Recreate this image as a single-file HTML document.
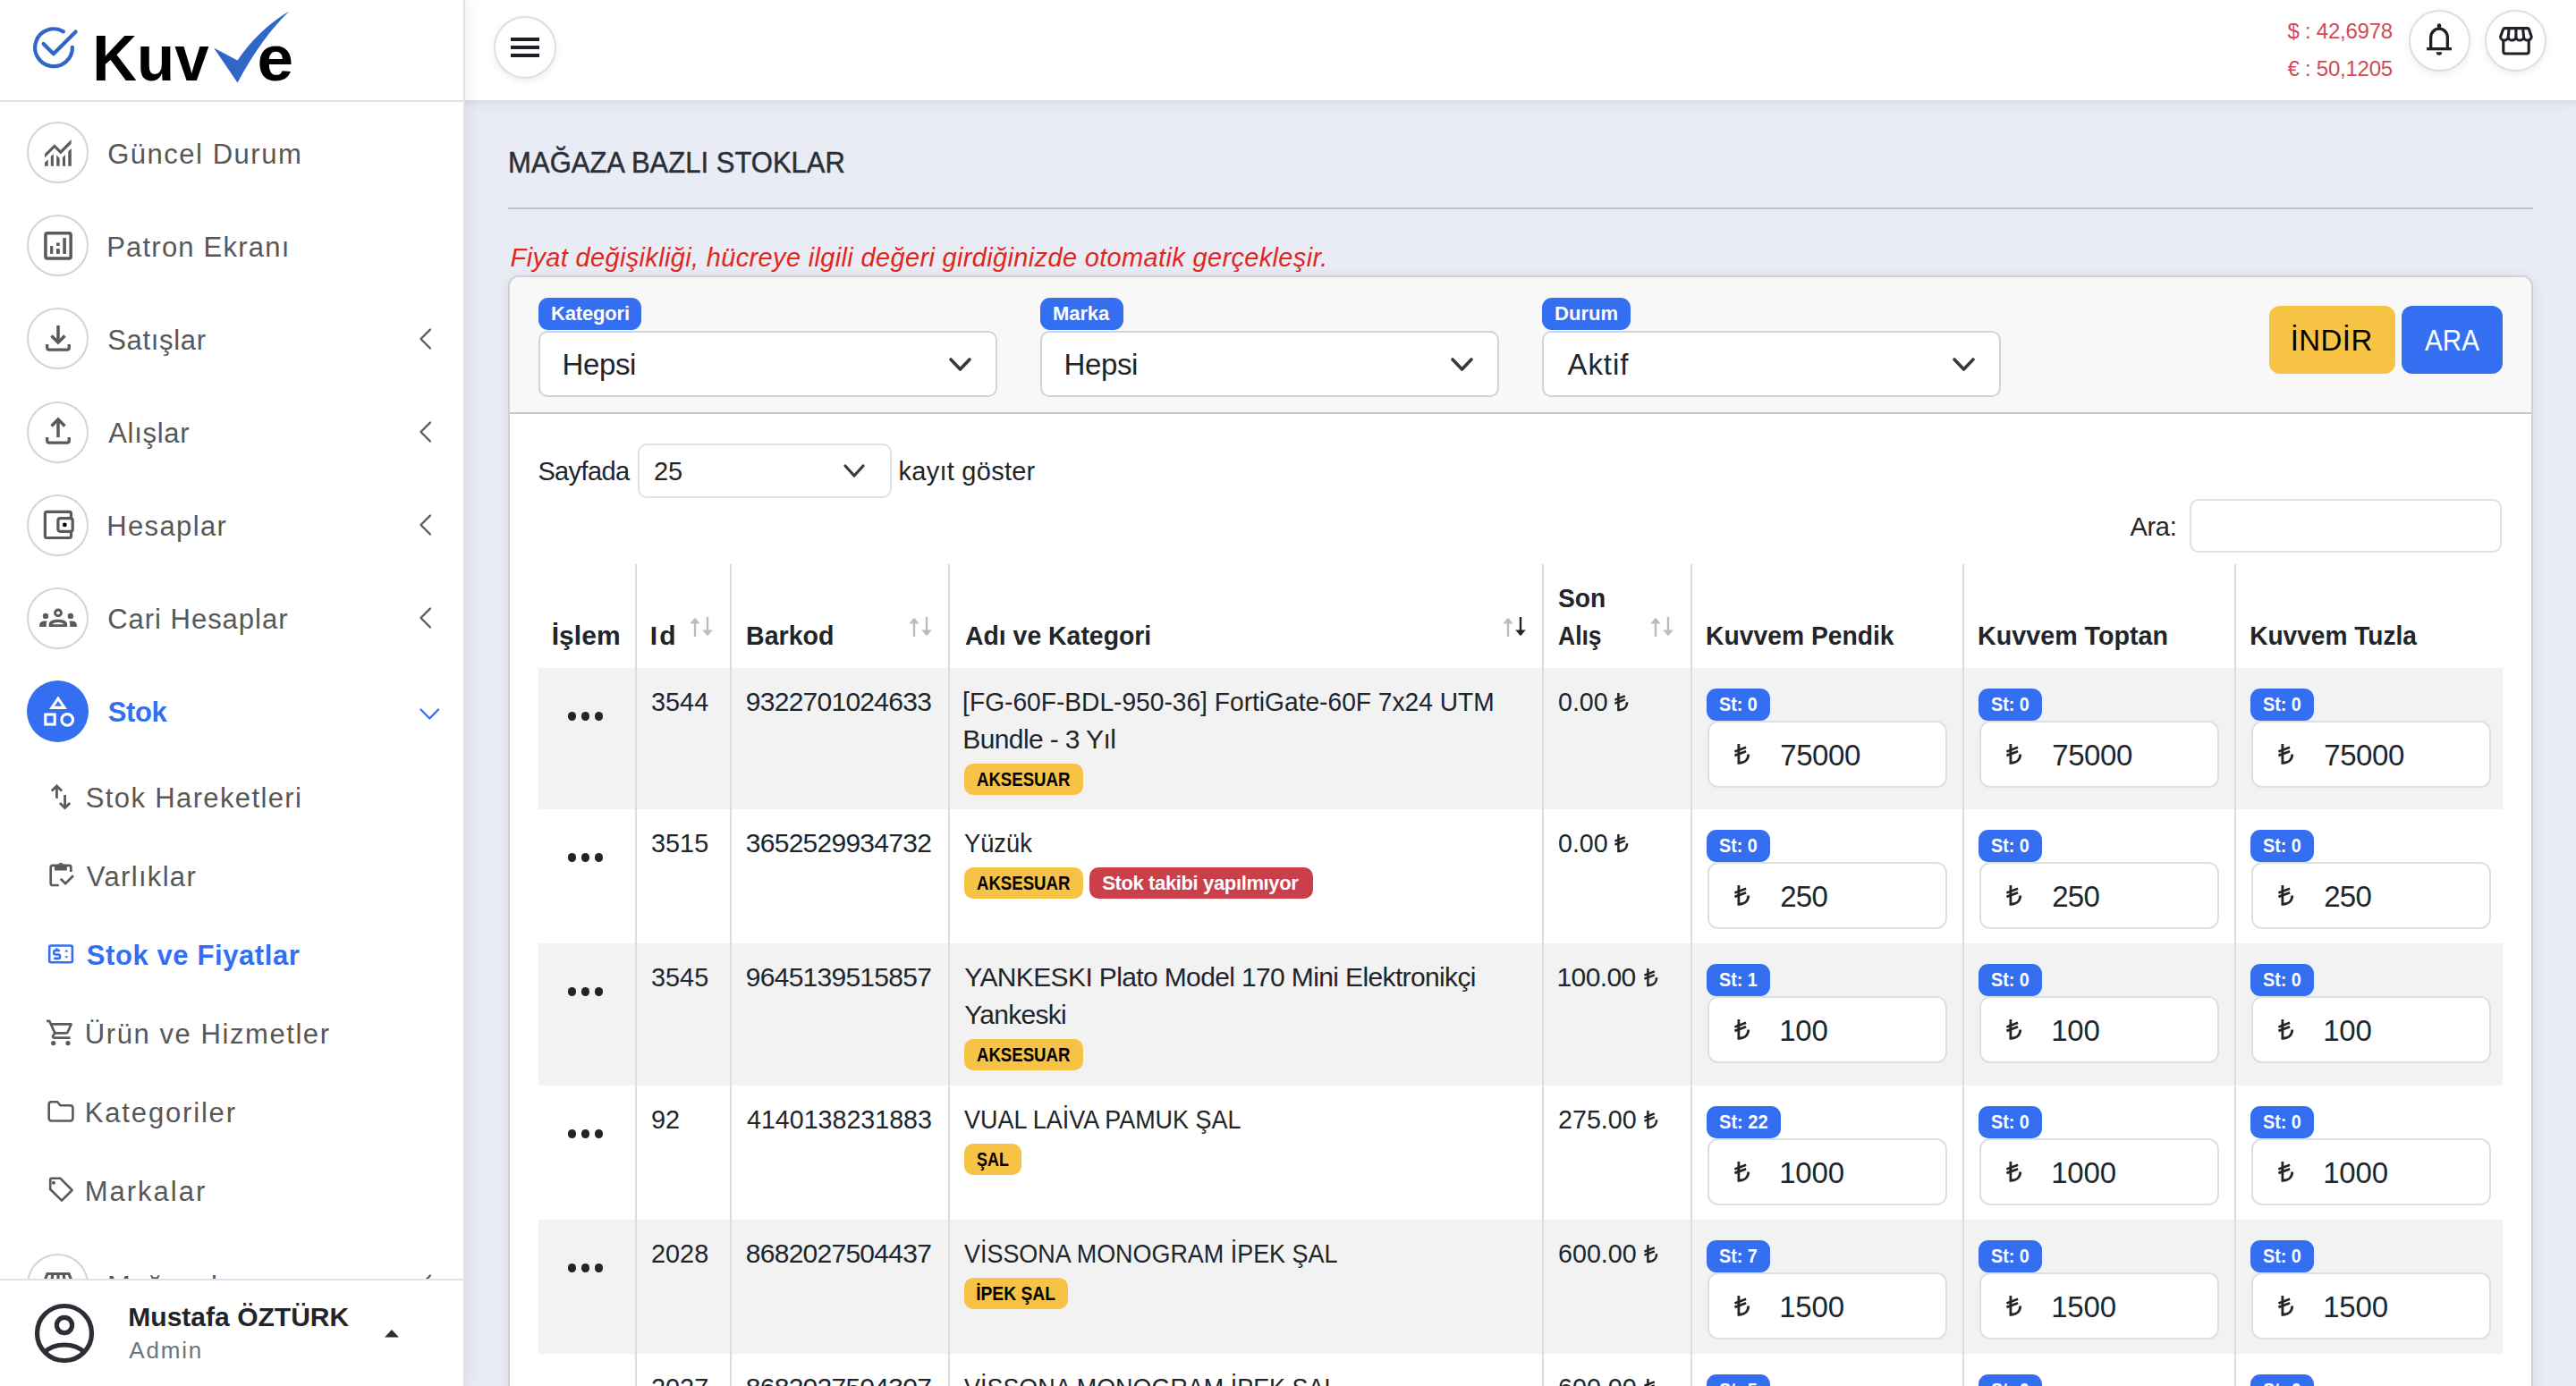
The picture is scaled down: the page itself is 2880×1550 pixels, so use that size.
<!DOCTYPE html>
<html><head><meta charset="utf-8"><style>
html,body{margin:0;padding:0;}
html{overflow:hidden;width:2880px;height:1550px;background:#e9ecf4;}
body{width:2880px;height:1550px;overflow:hidden;position:relative;background:#e9ecf4;font-family:"Liberation Sans",sans-serif;}
#root{position:relative;width:2880px;height:1550px;overflow:hidden;background:#e9ecf4;}
@media (max-width: 2000px) { html,body{width:1440px;height:775px;} #root{zoom:0.5;} }
.t{position:absolute;white-space:nowrap;}
svg{overflow:visible}
</style></head><body><div id="root">

<div style="position:absolute;left:0px;top:0px;width:518px;height:1550px;background:#fff;box-shadow:2px 0 20px rgba(0,0,0,.09);z-index:1"></div><div style="position:absolute;left:518px;top:0px;width:2px;height:1550px;background:#dfe1e6;z-index:2"></div><div style="position:absolute;left:0px;top:112px;width:518px;height:2px;background:#dfe1e6;z-index:2"></div><div style="position:absolute;left:520px;top:0px;width:2360px;height:112px;background:#fff;box-shadow:0 6px 12px rgba(0,0,0,.05);z-index:0"></div><div style="position:absolute;left:520px;top:112px;width:2360px;height:4px;background:#dfe0e5;z-index:0"></div><svg style="position:absolute;left:30px;top:25px;z-index:3" width="60" height="60" viewBox="30 25 60 60"><path d="M80.9 52.8 A20.9 20.9 0 1 1 70.9 35.4" fill="none" stroke="#2f66c8" stroke-width="4.2" stroke-linecap="round"/><path d="M48.6 49 L59.8 60.2 L84.6 35.4" fill="none" stroke="#2f66c8" stroke-width="4.2" stroke-linecap="round" stroke-linejoin="round"/></svg><svg style="position:absolute;left:230px;top:5px;z-index:3" width="100" height="95" viewBox="230 5 100 95"><path d="M239 53.5 L265.5 67.5 C281 45 300 26 323.5 12.5 C303 32 284 58 265.5 92.5 Z" fill="#2f66c8"/></svg><div style="position:absolute;left:30px;top:136.3px;width:69px;height:69px;border-radius:50%;box-sizing:border-box;border:2px solid #d4d4d4;background:#fff;z-index:3"></div><div style="position:absolute;left:30px;top:240.37px;width:69px;height:69px;border-radius:50%;box-sizing:border-box;border:2px solid #d4d4d4;background:#fff;z-index:3"></div><div style="position:absolute;left:30px;top:344.44px;width:69px;height:69px;border-radius:50%;box-sizing:border-box;border:2px solid #d4d4d4;background:#fff;z-index:3"></div><svg style="position:absolute;left:466px;top:366.94px;z-index:3" width="20" height="24" viewBox="466 366.94 20 24"><path d="M481 368.5 L470.5 379 L481 389.5" transform="translate(0,-0.060000000000002274)" fill="none" stroke="#5a5a5a" stroke-width="2.3" stroke-linecap="round" stroke-linejoin="round"/></svg><div style="position:absolute;left:30px;top:448.51px;width:69px;height:69px;border-radius:50%;box-sizing:border-box;border:2px solid #d4d4d4;background:#fff;z-index:3"></div><svg style="position:absolute;left:466px;top:471.01px;z-index:3" width="20" height="24" viewBox="466 471.01 20 24"><path d="M481 368.5 L470.5 379 L481 389.5" transform="translate(0,104.00999999999999)" fill="none" stroke="#5a5a5a" stroke-width="2.3" stroke-linecap="round" stroke-linejoin="round"/></svg><div style="position:absolute;left:30px;top:552.5799999999999px;width:69px;height:69px;border-radius:50%;box-sizing:border-box;border:2px solid #d4d4d4;background:#fff;z-index:3"></div><svg style="position:absolute;left:466px;top:575.0799999999999px;z-index:3" width="20" height="24" viewBox="466 575.0799999999999 20 24"><path d="M481 368.5 L470.5 379 L481 389.5" transform="translate(0,208.07999999999993)" fill="none" stroke="#5a5a5a" stroke-width="2.3" stroke-linecap="round" stroke-linejoin="round"/></svg><div style="position:absolute;left:30px;top:656.6499999999999px;width:69px;height:69px;border-radius:50%;box-sizing:border-box;border:2px solid #d4d4d4;background:#fff;z-index:3"></div><svg style="position:absolute;left:466px;top:679.1499999999999px;z-index:3" width="20" height="24" viewBox="466 679.1499999999999 20 24"><path d="M481 368.5 L470.5 379 L481 389.5" transform="translate(0,312.14999999999986)" fill="none" stroke="#5a5a5a" stroke-width="2.3" stroke-linecap="round" stroke-linejoin="round"/></svg><div style="position:absolute;left:30px;top:760.72px;width:69px;height:69px;border-radius:50%;background:#346ef1;z-index:3"></div><svg style="position:absolute;left:466px;top:785px;z-index:3" width="28" height="28" viewBox="466 785 28 28"><path d="M470.5 793.5 L480.3 803.5 L490 793.5" fill="none" stroke="#346ef1" stroke-width="2.3" stroke-linecap="round" stroke-linejoin="round"/></svg><svg style="position:absolute;left:40px;top:145px;z-index:3" width="50" height="50" viewBox="40 145 50 50"><g fill="#5a5a5a"><path d="M50.05 171.9 L60.9 161.3 L67.8 167.9 L79.6 156.1 L79.6 160.7 L67.8 172.5 L60.9 165.6 L50.05 176.4 Z"/><path d="M50.05 185.8V181.7L53.7 178.3V185.8Z M56.8 185.8V175.1L59.9 172.2V185.8Z M63.2 185.8V173.4L66.6 177.1V185.8Z M70 185.8V176L73 173.1V185.8Z M76.3 185.8V169.3L79.8 166V185.8Z"/></g></svg><svg style="position:absolute;left:40px;top:250px;z-index:3" width="50" height="50" viewBox="40 250 50 50"><rect x="50.95" y="260.75" width="28.2" height="28.3" rx="2" fill="none" stroke="#5a5a5a" stroke-width="3.5"/><g fill="#5a5a5a"><rect x="56.1" y="275" width="3.2" height="8.9"/><rect x="63" y="278.1" width="3.8" height="5.8"/><rect x="63" y="271.5" width="3.8" height="3.4"/><rect x="70.3" y="266.1" width="3.6" height="17.8"/></g></svg><svg style="position:absolute;left:40px;top:353.94px;z-index:3" width="50" height="50.0" viewBox="40 353.94 50 50.0"><g fill="none" stroke="#5a5a5a" stroke-width="3.5"><path d="M65 363.9V383"/><path d="M57.5 375.4L65 382.9L72.5 375.4" stroke-linejoin="miter"/><path d="M52.7 385V388.6Q52.7 391 55.2 391H74.8Q77.3 391 77.3 388.6V385" stroke-width="3.3"/></g></svg><svg style="position:absolute;left:40px;top:458.01px;z-index:3" width="50" height="50.0" viewBox="40 458.01 50 50.0"><g fill="none" stroke="#5a5a5a" stroke-width="3.5"><path d="M65 470.5V489"/><path d="M57.5 476.6L65 469.1L72.5 476.6" stroke-linejoin="miter"/><path d="M52.7 489.1V492.7Q52.7 495.1 55.2 495.1H74.8Q77.3 495.1 77.3 492.7V489.1" stroke-width="3.3"/></g></svg><svg style="position:absolute;left:40px;top:560px;z-index:3" width="50" height="50" viewBox="40 560 50 50"><g fill="none" stroke="#5a5a5a" stroke-width="3.2"><path d="M79.5 579.7V574.4A2 2 0 0 0 77.5 572.4H52.4A2 2 0 0 0 50.4 574.4V599.5A2 2 0 0 0 52.4 601.5H77.5A2 2 0 0 0 79.5 599.5V594.3"/><rect x="64.9" y="579.7" width="16.3" height="14.6" rx="2.5"/></g><circle cx="72.3" cy="586.9" r="2.4" fill="{G}"/></svg><svg style="position:absolute;left:40px;top:670px;z-index:3" width="50" height="40" viewBox="40 670 50 40"><g fill="#5a5a5a"><circle cx="51" cy="688.9" r="3.2"/><circle cx="78.9" cy="688.9" r="3.2"/><circle cx="65" cy="685.4" r="3.4" fill="none" stroke="#5a5a5a" stroke-width="3"/><path fill-rule="evenodd" d="M54.7 701V698C54.7 694.6 59.4 692.8 65 692.8C70.6 692.8 75.1 694.6 75.1 698V701Z M58.4 698.2C59.6 696.9 62 696.1 65 696.1C68 696.1 70.3 696.9 71.4 698.2Z"/><path d="M44.2 701V698.6C44.2 696.1 46.6 694.5 50.2 694.5H52.7C52.1 695.6 51.8 696.9 51.8 698.3V701Z"/><path d="M85.8 701V698.6C85.8 696.1 83.4 694.5 79.8 694.5H77.3C77.9 695.6 78.2 696.9 78.2 698.3V701Z"/></g></svg><svg style="position:absolute;left:40px;top:770px;z-index:3" width="50" height="50" viewBox="40 770 50 50"><g fill="none" stroke="#fff" stroke-width="3.1"><path d="M65 781.2L58 791.4H72Z" stroke-linejoin="miter"/><rect x="50.8" y="799" width="10.4" height="11.1"/><circle cx="75.2" cy="804.9" r="6.3"/></g></svg><svg style="position:absolute;left:50px;top:874px;z-index:3" width="36" height="36" viewBox="50 874 36 36"><g fill="none" stroke="#5a5a5a" stroke-width="2.8"><path d="M63.45 879V892.8"/><path d="M57.8 884.6L63.45 878.9L69.1 884.6" stroke-linejoin="miter"/><path d="M72.55 889V903.5"/><path d="M66.9 897.9L72.55 903.6L78.2 897.9" stroke-linejoin="miter"/></g></svg><svg style="position:absolute;left:50px;top:960px;z-index:3" width="36" height="36" viewBox="50 960 36 36"><g fill="none" stroke="#5a5a5a" stroke-width="2.7"><path d="M65.8 990H58.6A1.9 1.9 0 0 1 56.7 988.1V969.7A1.9 1.9 0 0 1 58.6 967.8H77.4A1.9 1.9 0 0 1 79.3 969.7V975"/><path d="M67.8 982.8L73.1 988.1L82 979.2" stroke-linejoin="miter"/></g><path fill="#5a5a5a" fill-rule="evenodd" d="M61 967.2H64.9A3.1 3.1 0 0 1 71 967.2H74.8V973.6H61Z M66.7 967.7A1.2 1.2 0 1 0 69.1 967.7A1.2 1.2 0 1 0 66.7 967.7Z"/></svg><svg style="position:absolute;left:50px;top:1048px;z-index:3" width="36" height="36" viewBox="50 1048 36 36"><rect x="55.2" y="1057.5" width="25.7" height="18.7" rx="2" fill="none" stroke="#346ef1" stroke-width="2.6"/><g fill="none" stroke="#346ef1" stroke-width="2.5"><path d="M67.1 1063.1H61.6A1.3 1.3 0 0 0 60.3 1064.4V1066.1A1.3 1.3 0 0 0 61.6 1067.4H65.7A1.3 1.3 0 0 1 67 1068.7V1070.4A1.3 1.3 0 0 1 65.7 1071.7H60.1"/><path d="M63.45 1060.2V1063.1M63.45 1071.7V1073.6"/></g><g fill="#346ef1"><path d="M72.1 1064.6L74.3 1062.1L76.5 1064.6Z M72.1 1069.3L74.3 1071.8L76.5 1069.3Z"/></g></svg><svg style="position:absolute;left:50px;top:1136px;z-index:3" width="36" height="36" viewBox="50 1136 36 36"><g fill="none" stroke="#5a5a5a" stroke-width="2.6" stroke-linejoin="round"><path d="M52.1 1141.9H55.3L61.4 1155.4H73.6Q75.2 1155.4 75.8 1154L79.6 1145.4H57.4"/><path d="M61.4 1155.4L59.3 1158.2Q58.4 1160.6 61 1160.6H78.6"/></g><g fill="#5a5a5a"><circle cx="59.7" cy="1166.6" r="2.6"/><circle cx="76" cy="1166.6" r="2.6"/></g></svg><svg style="position:absolute;left:50px;top:1224px;z-index:3" width="36" height="36" viewBox="50 1224 36 36"><path d="M57.5 1232.3H64.2L67.4 1236.2H78.6A2.8 2.8 0 0 1 81.4 1239V1250.7A2.8 2.8 0 0 1 78.6 1253.5H57.5A2.8 2.8 0 0 1 54.7 1250.7V1235.1A2.8 2.8 0 0 1 57.5 1232.3Z" fill="none" stroke="#5a5a5a" stroke-width="2.6" stroke-linejoin="round"/></svg><svg style="position:absolute;left:50px;top:1311px;z-index:3" width="36" height="36" viewBox="50 1311 36 36"><path d="M57.4 1317.7H67.3L80.6 1331L69 1342.6L56.2 1330V1318.9A1.2 1.2 0 0 1 57.4 1317.7Z" fill="none" stroke="#5a5a5a" stroke-width="2.6" stroke-linejoin="round"/><circle cx="59.9" cy="1322.7" r="2" fill="#5a5a5a"/></svg><div style="position:absolute;left:30px;top:1402.0px;width:69px;height:69px;border-radius:50%;box-sizing:border-box;border:2px solid #d4d4d4;background:#fff;z-index:3"></div><svg style="position:absolute;left:40px;top:1410px;z-index:3" width="50" height="30" viewBox="40 1410 50 30"><g fill="none" stroke="#5a5a5a" stroke-width="3.2"><path d="M50.5 1431L53 1424.5H77L79.5 1431"/><path d="M59 1424.5L58 1431M65 1424.5V1431M71 1424.5L72 1431"/></g></svg><svg style="position:absolute;left:466px;top:1424.5px;z-index:3" width="20" height="24" viewBox="466 1424.5 20 24"><path d="M481 368.5 L470.5 379 L481 389.5" transform="translate(0,1057.5)" fill="none" stroke="#5a5a5a" stroke-width="2.3" stroke-linecap="round" stroke-linejoin="round"/></svg><div style="position:absolute;left:0px;top:1430px;width:518px;height:120px;background:#fff;z-index:5"></div><div style="position:absolute;left:0px;top:1430px;width:518px;height:2px;background:#dfe1e6;z-index:5"></div><svg style="position:absolute;left:38px;top:1457px;z-index:6" width="68" height="68" viewBox="0 0 68 68"><g fill="none" stroke="#2b2f35" stroke-width="5.2"><circle cx="34" cy="34" r="30.5"/><circle cx="34" cy="25" r="8.6"/><path d="M11.5 55.5C17 50 25 47 34 47s17 3 22.5 8.5"/></g></svg><svg style="position:absolute;left:428px;top:1484px;z-index:6" width="20" height="14" viewBox="428 1484 20 14"><path d="M430 1495.5 L438 1487 L446 1495.5 Z" fill="#2b2f35"/></svg><div style="position:absolute;left:552px;top:18px;width:70px;height:70px;border-radius:50%;box-sizing:border-box;border:2px solid #dcdfe4;background:#fff;box-shadow:0 3px 8px rgba(0,0,0,.07)"></div><div style="position:absolute;left:571px;top:42px;width:32px;height:4px;background:#1e2127"></div><div style="position:absolute;left:571px;top:51px;width:32px;height:4px;background:#1e2127"></div><div style="position:absolute;left:571px;top:60px;width:32px;height:4px;background:#1e2127"></div><div style="position:absolute;left:2692.5px;top:11px;width:69px;height:69px;border-radius:50%;box-sizing:border-box;border:2px solid #dcdfe4;background:#fff;box-shadow:0 3px 8px rgba(0,0,0,.07)"></div><div style="position:absolute;left:2778.0px;top:11px;width:69px;height:69px;border-radius:50%;box-sizing:border-box;border:2px solid #dcdfe4;background:#fff;box-shadow:0 3px 8px rgba(0,0,0,.07)"></div><svg style="position:absolute;left:2705px;top:22px;z-index:1" width="45" height="45" viewBox="2705 22 45 45"><g fill="#1e2127"><rect x="2724.8" y="26.2" width="4.4" height="6" rx="2.2"/><rect x="2713.1" y="53" width="27.8" height="3.3"/><path d="M2723.7 58.2H2730.2A3.25 3.6 0 0 1 2723.7 58.2Z"/></g><path d="M2717.65 54V41.8A9.35 9.6 0 0 1 2736.35 41.8V54" fill="none" stroke="#1e2127" stroke-width="3.3"/></svg><svg style="position:absolute;left:2790px;top:22px;z-index:1" width="45" height="45" viewBox="2790 22 45 45"><g fill="none" stroke="#1e2127" stroke-width="3.1" stroke-linejoin="round"><path d="M2798.8 44.5V57.5A2.5 2.5 0 0 0 2801.3 60H2824.7A2.5 2.5 0 0 0 2827.2 57.5V44.5"/><path d="M2800.2 31.6H2825.8Q2827 31.6 2827.4 32.8L2830.2 40.9A4.3 4.1 0 0 1 2821.55 40.9A4.3 4.1 0 0 1 2812.9 40.9A4.3 4.1 0 0 1 2804.25 40.9A4.3 4.1 0 0 1 2795.6 40.9L2798.6 32.8Q2799 31.6 2800.2 31.6Z"/><path d="M2805.2 31.6L2804.25 40.9M2812.9 31.6V40.9M2820.6 31.6L2821.55 40.9"/></g></svg><div style="position:absolute;left:568px;top:232px;width:2264px;height:2px;background:#bfc3ca"></div><div style="position:absolute;left:568px;top:308px;width:2264px;height:1400px;box-sizing:border-box;border:2px solid #d0d0d0;border-radius:12px;background:#fff;box-shadow:1px 2px 14px rgba(20,30,60,.09);overflow:hidden"></div><div style="position:absolute;left:570px;top:310px;width:2260px;height:151px;background:#f8f8f8;border-radius:10px 10px 0 0"></div><div style="position:absolute;left:570px;top:461px;width:2260px;height:2px;background:#c6c6c6"></div><div style="position:absolute;left:602px;top:370px;width:513px;height:74px;box-sizing:border-box;border:2px solid #ced4da;border-radius:10px;background:#fff"></div><div style="position:absolute;left:602px;top:333px;width:115px;height:36px;background:#346ef1;border-radius:11px"></div><svg style="position:absolute;left:1061px;top:399.5px;" width="25" height="16" viewBox="0 0 25 16"><path d="M2 2 L12.5 13 L23 2" fill="none" stroke="#343a40" stroke-width="3.6" stroke-linecap="round" stroke-linejoin="round"/></svg><div style="position:absolute;left:1163px;top:370px;width:513px;height:74px;box-sizing:border-box;border:2px solid #ced4da;border-radius:10px;background:#fff"></div><div style="position:absolute;left:1163px;top:333px;width:93px;height:36px;background:#346ef1;border-radius:11px"></div><svg style="position:absolute;left:1622px;top:399.5px;" width="25" height="16" viewBox="0 0 25 16"><path d="M2 2 L12.5 13 L23 2" fill="none" stroke="#343a40" stroke-width="3.6" stroke-linecap="round" stroke-linejoin="round"/></svg><div style="position:absolute;left:1724px;top:370px;width:513px;height:74px;box-sizing:border-box;border:2px solid #ced4da;border-radius:10px;background:#fff"></div><div style="position:absolute;left:1724px;top:333px;width:99px;height:36px;background:#346ef1;border-radius:11px"></div><svg style="position:absolute;left:2183px;top:399.5px;" width="25" height="16" viewBox="0 0 25 16"><path d="M2 2 L12.5 13 L23 2" fill="none" stroke="#343a40" stroke-width="3.6" stroke-linecap="round" stroke-linejoin="round"/></svg><div style="position:absolute;left:2537px;top:342px;width:141px;height:76px;background:#f6c344;border-radius:12px"></div><div style="position:absolute;left:2685px;top:342px;width:113px;height:76px;background:#3470f1;border-radius:12px"></div><div style="position:absolute;left:713px;top:496px;width:284px;height:61px;box-sizing:border-box;border:2px solid #dee2e6;border-radius:10px;background:#fff"></div><svg style="position:absolute;left:942.7px;top:519px;" width="24" height="16" viewBox="0 0 24 16"><path d="M2 2 L12.0 13 L22 2" fill="none" stroke="#343a40" stroke-width="3.2" stroke-linecap="round" stroke-linejoin="round"/></svg><div style="position:absolute;left:2448px;top:558px;width:349px;height:60px;box-sizing:border-box;border:2px solid #dee2e6;border-radius:10px;background:#fff"></div><div style="position:absolute;left:602px;top:747px;width:2196px;height:158px;background:#f2f2f2"></div><div style="position:absolute;left:602px;top:1055px;width:2196px;height:159px;background:#f2f2f2"></div><div style="position:absolute;left:602px;top:1364px;width:2196px;height:150px;background:#f2f2f2"></div><div style="position:absolute;left:710px;top:631px;width:2px;height:1000px;background:#dcdde3"></div><div style="position:absolute;left:816px;top:631px;width:2px;height:1000px;background:#dcdde3"></div><div style="position:absolute;left:1060px;top:631px;width:2px;height:1000px;background:#dcdde3"></div><div style="position:absolute;left:1724px;top:631px;width:2px;height:1000px;background:#dcdde3"></div><div style="position:absolute;left:1890px;top:631px;width:2px;height:1000px;background:#dcdde3"></div><div style="position:absolute;left:2194px;top:631px;width:2px;height:1000px;background:#dcdde3"></div><div style="position:absolute;left:2498px;top:631px;width:2px;height:1000px;background:#dcdde3"></div><svg style="position:absolute;left:771px;top:689px;" width="28" height="24" viewBox="0 0 28 24"><g stroke-width="2.4" fill="none"><path d="M6 23V3" stroke="#bcbcbc"/><path d="M20 1v20" stroke="#bcbcbc"/></g><path d="M0.2 8.6L6 1.8l5.8 6.8z" fill="#bcbcbc"/><path d="M14.2 15.4L20 22.2l5.8-6.8z" fill="#bcbcbc"/></svg><svg style="position:absolute;left:1015.5px;top:689px;" width="28" height="24" viewBox="0 0 28 24"><g stroke-width="2.4" fill="none"><path d="M6 23V3" stroke="#bcbcbc"/><path d="M20 1v20" stroke="#bcbcbc"/></g><path d="M0.2 8.6L6 1.8l5.8 6.8z" fill="#bcbcbc"/><path d="M14.2 15.4L20 22.2l5.8-6.8z" fill="#bcbcbc"/></svg><svg style="position:absolute;left:1679.5px;top:689px;" width="28" height="24" viewBox="0 0 28 24"><g stroke-width="2.4" fill="none"><path d="M6 23V3" stroke="#bcbcbc"/><path d="M20 1v20" stroke="#212529"/></g><path d="M0.2 8.6L6 1.8l5.8 6.8z" fill="#bcbcbc"/><path d="M14.2 15.4L20 22.2l5.8-6.8z" fill="#212529"/></svg><svg style="position:absolute;left:1845px;top:689px;" width="28" height="24" viewBox="0 0 28 24"><g stroke-width="2.4" fill="none"><path d="M6 23V3" stroke="#bcbcbc"/><path d="M20 1v20" stroke="#bcbcbc"/></g><path d="M0.2 8.6L6 1.8l5.8 6.8z" fill="#bcbcbc"/><path d="M14.2 15.4L20 22.2l5.8-6.8z" fill="#bcbcbc"/></svg><div style="position:absolute;left:634.5px;top:796.3px;width:9.4px;height:9.4px;border-radius:50%;background:#212529"></div><div style="position:absolute;left:649.5px;top:796.3px;width:9.4px;height:9.4px;border-radius:50%;background:#212529"></div><div style="position:absolute;left:664.5px;top:796.3px;width:9.4px;height:9.4px;border-radius:50%;background:#212529"></div><div style="position:absolute;left:1078px;top:854px;width:133px;height:35px;background:#f6c344;border-radius:10px"></div><svg style="position:absolute;left:1805px;top:774.6px;" width="15.5" height="20.4" viewBox="0 0 15.5 20.4"><g fill="none" stroke="#212529" stroke-width="2.5" stroke-linecap="butt"><path d="M4.4 0V19.1c6.3 0 9.7-3.6 9.7-8.8"/><path d="M0.4 7.6L11.8 3.4M0.4 11.6L11.8 7.4"/></g></svg><div style="position:absolute;left:1908px;top:770px;width:71px;height:35.5px;background:#346ef1;border-radius:11px"></div><div style="position:absolute;left:1909px;top:806px;width:268px;height:75px;box-sizing:border-box;border:2px solid #dcdfe4;border-radius:12px;background:#fff"></div><svg style="position:absolute;left:1938.6px;top:832.2px;" width="17.247549019607845" height="22.7" viewBox="0 0 15.5 20.4"><g fill="none" stroke="#212529" stroke-width="2.5" stroke-linecap="butt"><path d="M4.4 0V19.1c6.3 0 9.7-3.6 9.7-8.8"/><path d="M0.4 7.6L11.8 3.4M0.4 11.6L11.8 7.4"/></g></svg><div style="position:absolute;left:2212px;top:770px;width:71px;height:35.5px;background:#346ef1;border-radius:11px"></div><div style="position:absolute;left:2213px;top:806px;width:268px;height:75px;box-sizing:border-box;border:2px solid #dcdfe4;border-radius:12px;background:#fff"></div><svg style="position:absolute;left:2242.6px;top:832.2px;" width="17.247549019607845" height="22.7" viewBox="0 0 15.5 20.4"><g fill="none" stroke="#212529" stroke-width="2.5" stroke-linecap="butt"><path d="M4.4 0V19.1c6.3 0 9.7-3.6 9.7-8.8"/><path d="M0.4 7.6L11.8 3.4M0.4 11.6L11.8 7.4"/></g></svg><div style="position:absolute;left:2516px;top:770px;width:71px;height:35.5px;background:#346ef1;border-radius:11px"></div><div style="position:absolute;left:2517px;top:806px;width:268px;height:75px;box-sizing:border-box;border:2px solid #dcdfe4;border-radius:12px;background:#fff"></div><svg style="position:absolute;left:2546.6px;top:832.2px;" width="17.247549019607845" height="22.7" viewBox="0 0 15.5 20.4"><g fill="none" stroke="#212529" stroke-width="2.5" stroke-linecap="butt"><path d="M4.4 0V19.1c6.3 0 9.7-3.6 9.7-8.8"/><path d="M0.4 7.6L11.8 3.4M0.4 11.6L11.8 7.4"/></g></svg><div style="position:absolute;left:634.5px;top:954.3px;width:9.4px;height:9.4px;border-radius:50%;background:#212529"></div><div style="position:absolute;left:649.5px;top:954.3px;width:9.4px;height:9.4px;border-radius:50%;background:#212529"></div><div style="position:absolute;left:664.5px;top:954.3px;width:9.4px;height:9.4px;border-radius:50%;background:#212529"></div><div style="position:absolute;left:1078px;top:970px;width:133px;height:35px;background:#f6c344;border-radius:10px"></div><div style="position:absolute;left:1218px;top:970px;width:250px;height:35px;background:#ca3f49;border-radius:10px"></div><svg style="position:absolute;left:1805px;top:932.6px;" width="15.5" height="20.4" viewBox="0 0 15.5 20.4"><g fill="none" stroke="#212529" stroke-width="2.5" stroke-linecap="butt"><path d="M4.4 0V19.1c6.3 0 9.7-3.6 9.7-8.8"/><path d="M0.4 7.6L11.8 3.4M0.4 11.6L11.8 7.4"/></g></svg><div style="position:absolute;left:1908px;top:928px;width:71px;height:35.5px;background:#346ef1;border-radius:11px"></div><div style="position:absolute;left:1909px;top:964px;width:268px;height:75px;box-sizing:border-box;border:2px solid #dcdfe4;border-radius:12px;background:#fff"></div><svg style="position:absolute;left:1938.6px;top:990.2px;" width="17.247549019607845" height="22.7" viewBox="0 0 15.5 20.4"><g fill="none" stroke="#212529" stroke-width="2.5" stroke-linecap="butt"><path d="M4.4 0V19.1c6.3 0 9.7-3.6 9.7-8.8"/><path d="M0.4 7.6L11.8 3.4M0.4 11.6L11.8 7.4"/></g></svg><div style="position:absolute;left:2212px;top:928px;width:71px;height:35.5px;background:#346ef1;border-radius:11px"></div><div style="position:absolute;left:2213px;top:964px;width:268px;height:75px;box-sizing:border-box;border:2px solid #dcdfe4;border-radius:12px;background:#fff"></div><svg style="position:absolute;left:2242.6px;top:990.2px;" width="17.247549019607845" height="22.7" viewBox="0 0 15.5 20.4"><g fill="none" stroke="#212529" stroke-width="2.5" stroke-linecap="butt"><path d="M4.4 0V19.1c6.3 0 9.7-3.6 9.7-8.8"/><path d="M0.4 7.6L11.8 3.4M0.4 11.6L11.8 7.4"/></g></svg><div style="position:absolute;left:2516px;top:928px;width:71px;height:35.5px;background:#346ef1;border-radius:11px"></div><div style="position:absolute;left:2517px;top:964px;width:268px;height:75px;box-sizing:border-box;border:2px solid #dcdfe4;border-radius:12px;background:#fff"></div><svg style="position:absolute;left:2546.6px;top:990.2px;" width="17.247549019607845" height="22.7" viewBox="0 0 15.5 20.4"><g fill="none" stroke="#212529" stroke-width="2.5" stroke-linecap="butt"><path d="M4.4 0V19.1c6.3 0 9.7-3.6 9.7-8.8"/><path d="M0.4 7.6L11.8 3.4M0.4 11.6L11.8 7.4"/></g></svg><div style="position:absolute;left:634.5px;top:1104.3px;width:9.4px;height:9.4px;border-radius:50%;background:#212529"></div><div style="position:absolute;left:649.5px;top:1104.3px;width:9.4px;height:9.4px;border-radius:50%;background:#212529"></div><div style="position:absolute;left:664.5px;top:1104.3px;width:9.4px;height:9.4px;border-radius:50%;background:#212529"></div><div style="position:absolute;left:1078px;top:1162px;width:133px;height:35px;background:#f6c344;border-radius:10px"></div><svg style="position:absolute;left:1837.5px;top:1082.6px;" width="15.5" height="20.4" viewBox="0 0 15.5 20.4"><g fill="none" stroke="#212529" stroke-width="2.5" stroke-linecap="butt"><path d="M4.4 0V19.1c6.3 0 9.7-3.6 9.7-8.8"/><path d="M0.4 7.6L11.8 3.4M0.4 11.6L11.8 7.4"/></g></svg><div style="position:absolute;left:1908px;top:1078px;width:71px;height:35.5px;background:#346ef1;border-radius:11px"></div><div style="position:absolute;left:1909px;top:1114px;width:268px;height:75px;box-sizing:border-box;border:2px solid #dcdfe4;border-radius:12px;background:#fff"></div><svg style="position:absolute;left:1938.6px;top:1140.2px;" width="17.247549019607845" height="22.7" viewBox="0 0 15.5 20.4"><g fill="none" stroke="#212529" stroke-width="2.5" stroke-linecap="butt"><path d="M4.4 0V19.1c6.3 0 9.7-3.6 9.7-8.8"/><path d="M0.4 7.6L11.8 3.4M0.4 11.6L11.8 7.4"/></g></svg><div style="position:absolute;left:2212px;top:1078px;width:71px;height:35.5px;background:#346ef1;border-radius:11px"></div><div style="position:absolute;left:2213px;top:1114px;width:268px;height:75px;box-sizing:border-box;border:2px solid #dcdfe4;border-radius:12px;background:#fff"></div><svg style="position:absolute;left:2242.6px;top:1140.2px;" width="17.247549019607845" height="22.7" viewBox="0 0 15.5 20.4"><g fill="none" stroke="#212529" stroke-width="2.5" stroke-linecap="butt"><path d="M4.4 0V19.1c6.3 0 9.7-3.6 9.7-8.8"/><path d="M0.4 7.6L11.8 3.4M0.4 11.6L11.8 7.4"/></g></svg><div style="position:absolute;left:2516px;top:1078px;width:71px;height:35.5px;background:#346ef1;border-radius:11px"></div><div style="position:absolute;left:2517px;top:1114px;width:268px;height:75px;box-sizing:border-box;border:2px solid #dcdfe4;border-radius:12px;background:#fff"></div><svg style="position:absolute;left:2546.6px;top:1140.2px;" width="17.247549019607845" height="22.7" viewBox="0 0 15.5 20.4"><g fill="none" stroke="#212529" stroke-width="2.5" stroke-linecap="butt"><path d="M4.4 0V19.1c6.3 0 9.7-3.6 9.7-8.8"/><path d="M0.4 7.6L11.8 3.4M0.4 11.6L11.8 7.4"/></g></svg><div style="position:absolute;left:634.5px;top:1263.3px;width:9.4px;height:9.4px;border-radius:50%;background:#212529"></div><div style="position:absolute;left:649.5px;top:1263.3px;width:9.4px;height:9.4px;border-radius:50%;background:#212529"></div><div style="position:absolute;left:664.5px;top:1263.3px;width:9.4px;height:9.4px;border-radius:50%;background:#212529"></div><div style="position:absolute;left:1078px;top:1279px;width:64px;height:35px;background:#f6c344;border-radius:10px"></div><svg style="position:absolute;left:1837.5px;top:1241.6px;" width="15.5" height="20.4" viewBox="0 0 15.5 20.4"><g fill="none" stroke="#212529" stroke-width="2.5" stroke-linecap="butt"><path d="M4.4 0V19.1c6.3 0 9.7-3.6 9.7-8.8"/><path d="M0.4 7.6L11.8 3.4M0.4 11.6L11.8 7.4"/></g></svg><div style="position:absolute;left:1908px;top:1237px;width:83px;height:35.5px;background:#346ef1;border-radius:11px"></div><div style="position:absolute;left:1909px;top:1273px;width:268px;height:75px;box-sizing:border-box;border:2px solid #dcdfe4;border-radius:12px;background:#fff"></div><svg style="position:absolute;left:1938.6px;top:1299.2px;" width="17.247549019607845" height="22.7" viewBox="0 0 15.5 20.4"><g fill="none" stroke="#212529" stroke-width="2.5" stroke-linecap="butt"><path d="M4.4 0V19.1c6.3 0 9.7-3.6 9.7-8.8"/><path d="M0.4 7.6L11.8 3.4M0.4 11.6L11.8 7.4"/></g></svg><div style="position:absolute;left:2212px;top:1237px;width:71px;height:35.5px;background:#346ef1;border-radius:11px"></div><div style="position:absolute;left:2213px;top:1273px;width:268px;height:75px;box-sizing:border-box;border:2px solid #dcdfe4;border-radius:12px;background:#fff"></div><svg style="position:absolute;left:2242.6px;top:1299.2px;" width="17.247549019607845" height="22.7" viewBox="0 0 15.5 20.4"><g fill="none" stroke="#212529" stroke-width="2.5" stroke-linecap="butt"><path d="M4.4 0V19.1c6.3 0 9.7-3.6 9.7-8.8"/><path d="M0.4 7.6L11.8 3.4M0.4 11.6L11.8 7.4"/></g></svg><div style="position:absolute;left:2516px;top:1237px;width:71px;height:35.5px;background:#346ef1;border-radius:11px"></div><div style="position:absolute;left:2517px;top:1273px;width:268px;height:75px;box-sizing:border-box;border:2px solid #dcdfe4;border-radius:12px;background:#fff"></div><svg style="position:absolute;left:2546.6px;top:1299.2px;" width="17.247549019607845" height="22.7" viewBox="0 0 15.5 20.4"><g fill="none" stroke="#212529" stroke-width="2.5" stroke-linecap="butt"><path d="M4.4 0V19.1c6.3 0 9.7-3.6 9.7-8.8"/><path d="M0.4 7.6L11.8 3.4M0.4 11.6L11.8 7.4"/></g></svg><div style="position:absolute;left:634.5px;top:1413.3px;width:9.4px;height:9.4px;border-radius:50%;background:#212529"></div><div style="position:absolute;left:649.5px;top:1413.3px;width:9.4px;height:9.4px;border-radius:50%;background:#212529"></div><div style="position:absolute;left:664.5px;top:1413.3px;width:9.4px;height:9.4px;border-radius:50%;background:#212529"></div><div style="position:absolute;left:1078px;top:1429px;width:116px;height:35px;background:#f6c344;border-radius:10px"></div><svg style="position:absolute;left:1837.5px;top:1391.6px;" width="15.5" height="20.4" viewBox="0 0 15.5 20.4"><g fill="none" stroke="#212529" stroke-width="2.5" stroke-linecap="butt"><path d="M4.4 0V19.1c6.3 0 9.7-3.6 9.7-8.8"/><path d="M0.4 7.6L11.8 3.4M0.4 11.6L11.8 7.4"/></g></svg><div style="position:absolute;left:1908px;top:1387px;width:71px;height:35.5px;background:#346ef1;border-radius:11px"></div><div style="position:absolute;left:1909px;top:1423px;width:268px;height:75px;box-sizing:border-box;border:2px solid #dcdfe4;border-radius:12px;background:#fff"></div><svg style="position:absolute;left:1938.6px;top:1449.2px;" width="17.247549019607845" height="22.7" viewBox="0 0 15.5 20.4"><g fill="none" stroke="#212529" stroke-width="2.5" stroke-linecap="butt"><path d="M4.4 0V19.1c6.3 0 9.7-3.6 9.7-8.8"/><path d="M0.4 7.6L11.8 3.4M0.4 11.6L11.8 7.4"/></g></svg><div style="position:absolute;left:2212px;top:1387px;width:71px;height:35.5px;background:#346ef1;border-radius:11px"></div><div style="position:absolute;left:2213px;top:1423px;width:268px;height:75px;box-sizing:border-box;border:2px solid #dcdfe4;border-radius:12px;background:#fff"></div><svg style="position:absolute;left:2242.6px;top:1449.2px;" width="17.247549019607845" height="22.7" viewBox="0 0 15.5 20.4"><g fill="none" stroke="#212529" stroke-width="2.5" stroke-linecap="butt"><path d="M4.4 0V19.1c6.3 0 9.7-3.6 9.7-8.8"/><path d="M0.4 7.6L11.8 3.4M0.4 11.6L11.8 7.4"/></g></svg><div style="position:absolute;left:2516px;top:1387px;width:71px;height:35.5px;background:#346ef1;border-radius:11px"></div><div style="position:absolute;left:2517px;top:1423px;width:268px;height:75px;box-sizing:border-box;border:2px solid #dcdfe4;border-radius:12px;background:#fff"></div><svg style="position:absolute;left:2546.6px;top:1449.2px;" width="17.247549019607845" height="22.7" viewBox="0 0 15.5 20.4"><g fill="none" stroke="#212529" stroke-width="2.5" stroke-linecap="butt"><path d="M4.4 0V19.1c6.3 0 9.7-3.6 9.7-8.8"/><path d="M0.4 7.6L11.8 3.4M0.4 11.6L11.8 7.4"/></g></svg><div style="position:absolute;left:634.5px;top:1563.3px;width:9.4px;height:9.4px;border-radius:50%;background:#212529"></div><div style="position:absolute;left:649.5px;top:1563.3px;width:9.4px;height:9.4px;border-radius:50%;background:#212529"></div><div style="position:absolute;left:664.5px;top:1563.3px;width:9.4px;height:9.4px;border-radius:50%;background:#212529"></div><div style="position:absolute;left:1078px;top:1579px;width:116px;height:35px;background:#f6c344;border-radius:10px"></div><svg style="position:absolute;left:1837.5px;top:1541.6px;" width="15.5" height="20.4" viewBox="0 0 15.5 20.4"><g fill="none" stroke="#212529" stroke-width="2.5" stroke-linecap="butt"><path d="M4.4 0V19.1c6.3 0 9.7-3.6 9.7-8.8"/><path d="M0.4 7.6L11.8 3.4M0.4 11.6L11.8 7.4"/></g></svg><div style="position:absolute;left:1908px;top:1537px;width:71px;height:35.5px;background:#346ef1;border-radius:11px"></div><div style="position:absolute;left:1909px;top:1573px;width:268px;height:75px;box-sizing:border-box;border:2px solid #dcdfe4;border-radius:12px;background:#fff"></div><svg style="position:absolute;left:1938.6px;top:1599.2px;" width="17.247549019607845" height="22.7" viewBox="0 0 15.5 20.4"><g fill="none" stroke="#212529" stroke-width="2.5" stroke-linecap="butt"><path d="M4.4 0V19.1c6.3 0 9.7-3.6 9.7-8.8"/><path d="M0.4 7.6L11.8 3.4M0.4 11.6L11.8 7.4"/></g></svg><div style="position:absolute;left:2212px;top:1537px;width:71px;height:35.5px;background:#346ef1;border-radius:11px"></div><div style="position:absolute;left:2213px;top:1573px;width:268px;height:75px;box-sizing:border-box;border:2px solid #dcdfe4;border-radius:12px;background:#fff"></div><svg style="position:absolute;left:2242.6px;top:1599.2px;" width="17.247549019607845" height="22.7" viewBox="0 0 15.5 20.4"><g fill="none" stroke="#212529" stroke-width="2.5" stroke-linecap="butt"><path d="M4.4 0V19.1c6.3 0 9.7-3.6 9.7-8.8"/><path d="M0.4 7.6L11.8 3.4M0.4 11.6L11.8 7.4"/></g></svg><div style="position:absolute;left:2516px;top:1537px;width:71px;height:35.5px;background:#346ef1;border-radius:11px"></div><div style="position:absolute;left:2517px;top:1573px;width:268px;height:75px;box-sizing:border-box;border:2px solid #dcdfe4;border-radius:12px;background:#fff"></div><svg style="position:absolute;left:2546.6px;top:1599.2px;" width="17.247549019607845" height="22.7" viewBox="0 0 15.5 20.4"><g fill="none" stroke="#212529" stroke-width="2.5" stroke-linecap="butt"><path d="M4.4 0V19.1c6.3 0 9.7-3.6 9.7-8.8"/><path d="M0.4 7.6L11.8 3.4M0.4 11.6L11.8 7.4"/></g></svg>
<div class="t" style="left:103.0px;top:28px;font-size:73px;line-height:73px;font-weight:700;color:#000;letter-spacing:0.00px;transform:scaleX(0.9456);transform-origin:4.0px 0;z-index:3;">Kuv</div><div class="t" style="left:287.6px;top:28px;font-size:73px;line-height:73px;font-weight:700;color:#000;letter-spacing:0.00px;z-index:3;">e</div><div class="t" style="left:120.2px;top:157px;font-size:31px;line-height:31px;font-weight:400;color:#575757;letter-spacing:1.52px;z-index:3;">Güncel Durum</div><div class="t" style="left:119.2px;top:261px;font-size:31px;line-height:31px;font-weight:400;color:#575757;letter-spacing:1.21px;z-index:3;">Patron Ekranı</div><div class="t" style="left:120.2px;top:365px;font-size:31px;line-height:31px;font-weight:400;color:#575757;letter-spacing:0.69px;z-index:3;">Satışlar</div><div class="t" style="left:121.2px;top:469px;font-size:31px;line-height:31px;font-weight:400;color:#575757;letter-spacing:0.72px;z-index:3;">Alışlar</div><div class="t" style="left:119.2px;top:573px;font-size:31px;line-height:31px;font-weight:400;color:#575757;letter-spacing:1.38px;z-index:3;">Hesaplar</div><div class="t" style="left:120.2px;top:677px;font-size:31px;line-height:31px;font-weight:400;color:#575757;letter-spacing:0.98px;z-index:3;">Cari Hesaplar</div><div class="t" style="left:120.8px;top:781px;font-size:31px;line-height:31px;font-weight:700;color:#346ef1;letter-spacing:-0.38px;z-index:3;">Stok</div><div class="t" style="left:95.8px;top:877px;font-size:31px;line-height:31px;font-weight:400;color:#575757;letter-spacing:1.37px;z-index:3;">Stok Hareketleri</div><div class="t" style="left:96.8px;top:965px;font-size:31px;line-height:31px;font-weight:400;color:#575757;letter-spacing:1.32px;z-index:3;">Varlıklar</div><div class="t" style="left:96.8px;top:1053px;font-size:31px;line-height:31px;font-weight:700;color:#346ef1;letter-spacing:0.59px;z-index:3;">Stok ve Fiyatlar</div><div class="t" style="left:94.8px;top:1141px;font-size:31px;line-height:31px;font-weight:400;color:#575757;letter-spacing:1.57px;z-index:3;">Ürün ve Hizmetler</div><div class="t" style="left:94.8px;top:1229px;font-size:31px;line-height:31px;font-weight:400;color:#575757;letter-spacing:1.83px;z-index:3;">Kategoriler</div><div class="t" style="left:94.8px;top:1317px;font-size:31px;line-height:31px;font-weight:400;color:#575757;letter-spacing:1.98px;z-index:3;">Markalar</div><div class="t" style="left:120.0px;top:1423px;font-size:31px;line-height:31px;font-weight:400;color:#575757;letter-spacing:0.95px;z-index:3;">Mağazalar</div><div class="t" style="left:143.3px;top:1458px;font-size:30px;line-height:30px;font-weight:700;color:#212529;letter-spacing:0.02px;z-index:6;">Mustafa ÖZTÜRK</div><div class="t" style="left:144.3px;top:1497px;font-size:26px;line-height:26px;font-weight:400;color:#6c757d;letter-spacing:1.79px;z-index:6;">Admin</div><div class="t" style="left:2557.4px;top:23px;font-size:24px;line-height:24px;font-weight:400;color:#d24a54;letter-spacing:-0.24px;">$ : 42,6978</div><div class="t" style="left:2557.4px;top:65px;font-size:24px;line-height:24px;font-weight:400;color:#d24a54;letter-spacing:-0.24px;">€ : 50,1205</div><div class="t" style="left:568.1px;top:165px;font-size:33px;line-height:33px;font-weight:400;color:#2b2f38;letter-spacing:0.00px;transform:scaleX(0.9395);transform-origin:2.0px 0;-webkit-text-stroke:0.5px #2b2f38;">MAĞAZA BAZLI STOKLAR</div><div class="t" style="left:570.6px;top:274px;font-size:29px;line-height:29px;font-weight:400;color:#e2261c;letter-spacing:0.34px;font-style:italic;">Fiyat değişikliği, hücreye ilgili değeri girdiğinizde otomatik gerçekleşir.</div><div class="t" style="left:616.0px;top:340px;font-size:22px;line-height:22px;font-weight:700;color:#fff;letter-spacing:-0.17px;">Kategori</div><div class="t" style="left:628.5px;top:391px;font-size:33px;line-height:33px;font-weight:400;color:#212529;letter-spacing:-0.36px;">Hepsi</div><div class="t" style="left:1177.0px;top:340px;font-size:22px;line-height:22px;font-weight:700;color:#fff;letter-spacing:-0.09px;">Marka</div><div class="t" style="left:1189.5px;top:391px;font-size:33px;line-height:33px;font-weight:400;color:#212529;letter-spacing:-0.36px;">Hepsi</div><div class="t" style="left:1738.0px;top:340px;font-size:22px;line-height:22px;font-weight:700;color:#fff;letter-spacing:0.07px;">Durum</div><div class="t" style="left:1752.5px;top:391px;font-size:33px;line-height:33px;font-weight:400;color:#212529;letter-spacing:0.92px;">Aktif</div><div class="t" style="left:2560.7px;top:364px;font-size:33px;line-height:33px;font-weight:400;color:#000;letter-spacing:0.43px;">İNDİR</div><div class="t" style="left:2711.0px;top:364px;font-size:33px;line-height:33px;font-weight:400;color:#fff;letter-spacing:0.00px;transform:scaleX(0.8991);transform-origin:0.0px 0;">ARA</div><div class="t" style="left:601.4px;top:513px;font-size:29px;line-height:29px;font-weight:400;color:#212529;letter-spacing:-0.63px;">Sayfada</div><div class="t" style="left:730.9px;top:513px;font-size:29px;line-height:29px;font-weight:400;color:#212529;letter-spacing:0.00px;">25</div><div class="t" style="left:1004.5px;top:513px;font-size:29px;line-height:29px;font-weight:400;color:#212529;letter-spacing:0.26px;">kayıt göster</div><div class="t" style="left:2381.4px;top:575px;font-size:29px;line-height:29px;font-weight:400;color:#212529;letter-spacing:-0.28px;">Ara:</div><div class="t" style="left:616.7px;top:696px;font-size:30px;line-height:30px;font-weight:700;color:#212529;letter-spacing:0.04px;">İşlem</div><div class="t" style="left:726.8px;top:696px;font-size:30px;line-height:30px;font-weight:700;color:#212529;letter-spacing:2.17px;">Id</div><div class="t" style="left:833.5px;top:696px;font-size:30px;line-height:30px;font-weight:700;color:#212529;letter-spacing:0.00px;transform:scaleX(0.9507);transform-origin:2.0px 0;">Barkod</div><div class="t" style="left:1078.5px;top:696px;font-size:30px;line-height:30px;font-weight:700;color:#212529;letter-spacing:0.00px;transform:scaleX(0.9464);transform-origin:0.0px 0;">Adı ve Kategori</div><div class="t" style="left:1742.0px;top:654px;font-size:30px;line-height:30px;font-weight:700;color:#212529;letter-spacing:0.00px;transform:scaleX(0.9397);transform-origin:0.0px 0;">Son</div><div class="t" style="left:1742.0px;top:696px;font-size:30px;line-height:30px;font-weight:700;color:#212529;letter-spacing:0.00px;transform:scaleX(0.8834);transform-origin:0.0px 0;">Alış</div><div class="t" style="left:1907.0px;top:696px;font-size:30px;line-height:30px;font-weight:700;color:#212529;letter-spacing:0.00px;transform:scaleX(0.9417);transform-origin:2.0px 0;">Kuvvem Pendik</div><div class="t" style="left:2210.7px;top:696px;font-size:30px;line-height:30px;font-weight:700;color:#212529;letter-spacing:0.00px;transform:scaleX(0.9555);transform-origin:2.0px 0;">Kuvvem Toptan</div><div class="t" style="left:2514.8px;top:696px;font-size:30px;line-height:30px;font-weight:700;color:#212529;letter-spacing:0.00px;transform:scaleX(0.9362);transform-origin:2.0px 0;">Kuvvem Tuzla</div><div class="t" style="left:727.5px;top:770px;font-size:30px;line-height:30px;font-weight:400;color:#212529;letter-spacing:0.00px;transform:scaleX(0.9607);transform-origin:1.0px 0;">3544</div><div class="t" style="left:833.8px;top:770px;font-size:30px;line-height:30px;font-weight:400;color:#212529;letter-spacing:-0.74px;">9322701024633</div><div class="t" style="left:1076.3px;top:770px;font-size:30px;line-height:30px;font-weight:400;color:#212529;letter-spacing:0.00px;transform:scaleX(0.9385);transform-origin:2.0px 0;">[FG-60F-BDL-950-36] FortiGate-60F 7x24 UTM</div><div class="t" style="left:1076.3px;top:812px;font-size:30px;line-height:30px;font-weight:400;color:#212529;letter-spacing:-0.62px;">Bundle - 3 Yıl</div><div class="t" style="left:1092.2px;top:861px;font-size:22px;line-height:22px;font-weight:700;color:#000;letter-spacing:0.00px;transform:scaleX(0.8457);transform-origin:0.0px 0;">AKSESUAR</div><div class="t" style="left:1741.5px;top:770px;font-size:30px;line-height:30px;font-weight:400;color:#212529;letter-spacing:0.00px;transform:scaleX(0.9523);transform-origin:1.0px 0;">0.00</div><div class="t" style="left:1922.0px;top:777px;font-size:22px;line-height:22px;font-weight:700;color:#fff;letter-spacing:0.00px;transform:scaleX(0.8959);transform-origin:0.0px 0;">St: 0</div><div class="t" style="left:1990.2px;top:828px;font-size:33px;line-height:33px;font-weight:400;color:#212529;letter-spacing:-0.40px;">75000</div><div class="t" style="left:2226.0px;top:777px;font-size:22px;line-height:22px;font-weight:700;color:#fff;letter-spacing:0.00px;transform:scaleX(0.8959);transform-origin:0.0px 0;">St: 0</div><div class="t" style="left:2294.2px;top:828px;font-size:33px;line-height:33px;font-weight:400;color:#212529;letter-spacing:-0.40px;">75000</div><div class="t" style="left:2530.0px;top:777px;font-size:22px;line-height:22px;font-weight:700;color:#fff;letter-spacing:0.00px;transform:scaleX(0.8959);transform-origin:0.0px 0;">St: 0</div><div class="t" style="left:2598.2px;top:828px;font-size:33px;line-height:33px;font-weight:400;color:#212529;letter-spacing:-0.40px;">75000</div><div class="t" style="left:727.5px;top:928px;font-size:30px;line-height:30px;font-weight:400;color:#212529;letter-spacing:0.00px;transform:scaleX(0.9607);transform-origin:1.0px 0;">3515</div><div class="t" style="left:833.8px;top:928px;font-size:30px;line-height:30px;font-weight:400;color:#212529;letter-spacing:-0.74px;">3652529934732</div><div class="t" style="left:1078.3px;top:928px;font-size:30px;line-height:30px;font-weight:400;color:#212529;letter-spacing:0.00px;transform:scaleX(0.9090);transform-origin:0.0px 0;">Yüzük</div><div class="t" style="left:1092.2px;top:977px;font-size:22px;line-height:22px;font-weight:700;color:#000;letter-spacing:0.00px;transform:scaleX(0.8457);transform-origin:0.0px 0;">AKSESUAR</div><div class="t" style="left:1232.2px;top:977px;font-size:22px;line-height:22px;font-weight:700;color:#fff;letter-spacing:-0.37px;">Stok takibi yapılmıyor</div><div class="t" style="left:1741.5px;top:928px;font-size:30px;line-height:30px;font-weight:400;color:#212529;letter-spacing:0.00px;transform:scaleX(0.9523);transform-origin:1.0px 0;">0.00</div><div class="t" style="left:1922.0px;top:935px;font-size:22px;line-height:22px;font-weight:700;color:#fff;letter-spacing:0.00px;transform:scaleX(0.8959);transform-origin:0.0px 0;">St: 0</div><div class="t" style="left:1990.2px;top:986px;font-size:33px;line-height:33px;font-weight:400;color:#212529;letter-spacing:-0.75px;">250</div><div class="t" style="left:2226.0px;top:935px;font-size:22px;line-height:22px;font-weight:700;color:#fff;letter-spacing:0.00px;transform:scaleX(0.8959);transform-origin:0.0px 0;">St: 0</div><div class="t" style="left:2294.2px;top:986px;font-size:33px;line-height:33px;font-weight:400;color:#212529;letter-spacing:-0.75px;">250</div><div class="t" style="left:2530.0px;top:935px;font-size:22px;line-height:22px;font-weight:700;color:#fff;letter-spacing:0.00px;transform:scaleX(0.8959);transform-origin:0.0px 0;">St: 0</div><div class="t" style="left:2598.2px;top:986px;font-size:33px;line-height:33px;font-weight:400;color:#212529;letter-spacing:-0.75px;">250</div><div class="t" style="left:727.5px;top:1078px;font-size:30px;line-height:30px;font-weight:400;color:#212529;letter-spacing:0.00px;transform:scaleX(0.9607);transform-origin:1.0px 0;">3545</div><div class="t" style="left:833.8px;top:1078px;font-size:30px;line-height:30px;font-weight:400;color:#212529;letter-spacing:-0.74px;">9645139515857</div><div class="t" style="left:1078.3px;top:1078px;font-size:30px;line-height:30px;font-weight:400;color:#212529;letter-spacing:-0.63px;">YANKESKI Plato Model 170 Mini Elektronikçi</div><div class="t" style="left:1078.3px;top:1120px;font-size:30px;line-height:30px;font-weight:400;color:#212529;letter-spacing:-0.73px;">Yankeski</div><div class="t" style="left:1092.2px;top:1169px;font-size:22px;line-height:22px;font-weight:700;color:#000;letter-spacing:0.00px;transform:scaleX(0.8457);transform-origin:0.0px 0;">AKSESUAR</div><div class="t" style="left:1740.5px;top:1078px;font-size:30px;line-height:30px;font-weight:400;color:#212529;letter-spacing:-0.61px;">100.00</div><div class="t" style="left:1922.0px;top:1085px;font-size:22px;line-height:22px;font-weight:700;color:#fff;letter-spacing:0.00px;transform:scaleX(0.8959);transform-origin:0.0px 0;">St: 1</div><div class="t" style="left:1989.2px;top:1136px;font-size:33px;line-height:33px;font-weight:400;color:#212529;letter-spacing:-0.25px;">100</div><div class="t" style="left:2226.0px;top:1085px;font-size:22px;line-height:22px;font-weight:700;color:#fff;letter-spacing:0.00px;transform:scaleX(0.8959);transform-origin:0.0px 0;">St: 0</div><div class="t" style="left:2293.2px;top:1136px;font-size:33px;line-height:33px;font-weight:400;color:#212529;letter-spacing:-0.25px;">100</div><div class="t" style="left:2530.0px;top:1085px;font-size:22px;line-height:22px;font-weight:700;color:#fff;letter-spacing:0.00px;transform:scaleX(0.8959);transform-origin:0.0px 0;">St: 0</div><div class="t" style="left:2597.2px;top:1136px;font-size:33px;line-height:33px;font-weight:400;color:#212529;letter-spacing:-0.25px;">100</div><div class="t" style="left:727.5px;top:1237px;font-size:30px;line-height:30px;font-weight:400;color:#212529;letter-spacing:0.00px;transform:scaleX(0.9626);transform-origin:1.0px 0;">92</div><div class="t" style="left:834.8px;top:1237px;font-size:30px;line-height:30px;font-weight:400;color:#212529;letter-spacing:0.00px;transform:scaleX(0.9541);transform-origin:0.0px 0;">4140138231883</div><div class="t" style="left:1078.3px;top:1237px;font-size:30px;line-height:30px;font-weight:400;color:#212529;letter-spacing:0.00px;transform:scaleX(0.8980);transform-origin:0.0px 0;">VUAL LAİVA PAMUK ŞAL</div><div class="t" style="left:1092.2px;top:1286px;font-size:22px;line-height:22px;font-weight:700;color:#000;letter-spacing:0.00px;transform:scaleX(0.8149);transform-origin:0.0px 0;">ŞAL</div><div class="t" style="left:1741.5px;top:1237px;font-size:30px;line-height:30px;font-weight:400;color:#212529;letter-spacing:0.00px;transform:scaleX(0.9548);transform-origin:1.0px 0;">275.00</div><div class="t" style="left:1922.0px;top:1244px;font-size:22px;line-height:22px;font-weight:700;color:#fff;letter-spacing:0.00px;transform:scaleX(0.9133);transform-origin:0.0px 0;">St: 22</div><div class="t" style="left:1989.2px;top:1295px;font-size:33px;line-height:33px;font-weight:400;color:#212529;letter-spacing:-0.19px;">1000</div><div class="t" style="left:2226.0px;top:1244px;font-size:22px;line-height:22px;font-weight:700;color:#fff;letter-spacing:0.00px;transform:scaleX(0.8959);transform-origin:0.0px 0;">St: 0</div><div class="t" style="left:2293.2px;top:1295px;font-size:33px;line-height:33px;font-weight:400;color:#212529;letter-spacing:-0.19px;">1000</div><div class="t" style="left:2530.0px;top:1244px;font-size:22px;line-height:22px;font-weight:700;color:#fff;letter-spacing:0.00px;transform:scaleX(0.8959);transform-origin:0.0px 0;">St: 0</div><div class="t" style="left:2597.2px;top:1295px;font-size:33px;line-height:33px;font-weight:400;color:#212529;letter-spacing:-0.19px;">1000</div><div class="t" style="left:727.5px;top:1387px;font-size:30px;line-height:30px;font-weight:400;color:#212529;letter-spacing:0.00px;transform:scaleX(0.9607);transform-origin:1.0px 0;">2028</div><div class="t" style="left:833.8px;top:1387px;font-size:30px;line-height:30px;font-weight:400;color:#212529;letter-spacing:-0.74px;">8682027504437</div><div class="t" style="left:1078.3px;top:1387px;font-size:30px;line-height:30px;font-weight:400;color:#212529;letter-spacing:0.00px;transform:scaleX(0.8975);transform-origin:0.0px 0;">VİSSONA MONOGRAM İPEK ŞAL</div><div class="t" style="left:1091.2px;top:1436px;font-size:22px;line-height:22px;font-weight:700;color:#000;letter-spacing:0.00px;transform:scaleX(0.8748);transform-origin:1.0px 0;">İPEK ŞAL</div><div class="t" style="left:1741.5px;top:1387px;font-size:30px;line-height:30px;font-weight:400;color:#212529;letter-spacing:0.00px;transform:scaleX(0.9548);transform-origin:1.0px 0;">600.00</div><div class="t" style="left:1922.0px;top:1394px;font-size:22px;line-height:22px;font-weight:700;color:#fff;letter-spacing:0.00px;transform:scaleX(0.8959);transform-origin:0.0px 0;">St: 7</div><div class="t" style="left:1989.2px;top:1445px;font-size:33px;line-height:33px;font-weight:400;color:#212529;letter-spacing:-0.19px;">1500</div><div class="t" style="left:2226.0px;top:1394px;font-size:22px;line-height:22px;font-weight:700;color:#fff;letter-spacing:0.00px;transform:scaleX(0.8959);transform-origin:0.0px 0;">St: 0</div><div class="t" style="left:2293.2px;top:1445px;font-size:33px;line-height:33px;font-weight:400;color:#212529;letter-spacing:-0.19px;">1500</div><div class="t" style="left:2530.0px;top:1394px;font-size:22px;line-height:22px;font-weight:700;color:#fff;letter-spacing:0.00px;transform:scaleX(0.8959);transform-origin:0.0px 0;">St: 0</div><div class="t" style="left:2597.2px;top:1445px;font-size:33px;line-height:33px;font-weight:400;color:#212529;letter-spacing:-0.19px;">1500</div><div class="t" style="left:727.5px;top:1537px;font-size:30px;line-height:30px;font-weight:400;color:#212529;letter-spacing:0.00px;transform:scaleX(0.9607);transform-origin:1.0px 0;">2027</div><div class="t" style="left:833.8px;top:1537px;font-size:30px;line-height:30px;font-weight:400;color:#212529;letter-spacing:-0.74px;">8682027504307</div><div class="t" style="left:1078.3px;top:1537px;font-size:30px;line-height:30px;font-weight:400;color:#212529;letter-spacing:0.00px;transform:scaleX(0.8975);transform-origin:0.0px 0;">VİSSONA MONOGRAM İPEK ŞAL</div><div class="t" style="left:1091.2px;top:1586px;font-size:22px;line-height:22px;font-weight:700;color:#000;letter-spacing:0.00px;transform:scaleX(0.8748);transform-origin:1.0px 0;">İPEK ŞAL</div><div class="t" style="left:1741.5px;top:1537px;font-size:30px;line-height:30px;font-weight:400;color:#212529;letter-spacing:0.00px;transform:scaleX(0.9548);transform-origin:1.0px 0;">600.00</div><div class="t" style="left:1922.0px;top:1544px;font-size:22px;line-height:22px;font-weight:700;color:#fff;letter-spacing:0.00px;transform:scaleX(0.8959);transform-origin:0.0px 0;">St: 5</div><div class="t" style="left:1989.2px;top:1595px;font-size:33px;line-height:33px;font-weight:400;color:#212529;letter-spacing:-0.19px;">1500</div><div class="t" style="left:2226.0px;top:1544px;font-size:22px;line-height:22px;font-weight:700;color:#fff;letter-spacing:0.00px;transform:scaleX(0.8959);transform-origin:0.0px 0;">St: 0</div><div class="t" style="left:2293.2px;top:1595px;font-size:33px;line-height:33px;font-weight:400;color:#212529;letter-spacing:-0.19px;">1500</div><div class="t" style="left:2530.0px;top:1544px;font-size:22px;line-height:22px;font-weight:700;color:#fff;letter-spacing:0.00px;transform:scaleX(0.8959);transform-origin:0.0px 0;">St: 0</div><div class="t" style="left:2597.2px;top:1595px;font-size:33px;line-height:33px;font-weight:400;color:#212529;letter-spacing:-0.19px;">1500</div>

</div></body></html>
